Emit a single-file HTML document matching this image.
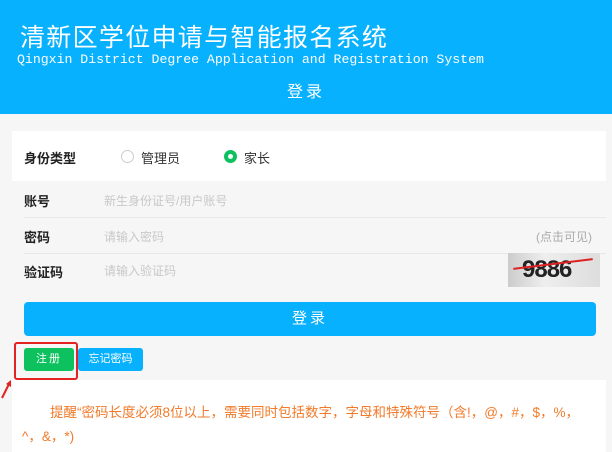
<!DOCTYPE html>
<html><head><meta charset="utf-8"><style>
*{margin:0;padding:0;box-sizing:border-box}
body{width:612px;height:452px;overflow:hidden;background:#f6f6f6;font-family:"Liberation Sans","Noto Sans CJK SC",sans-serif;position:relative}
.hd{position:absolute;left:0;top:0;width:612px;height:114px;background:#08b1fe;color:#fff}
.t1{position:absolute;left:20px;top:18px;font-size:25px;letter-spacing:1.3px;white-space:nowrap}
.t2{position:absolute;left:17px;top:52px;font-family:"Liberation Mono",monospace;font-size:13.2px;white-space:nowrap}
.t3{position:absolute;left:0;width:612px;text-align:center;top:78px;font-size:16px;letter-spacing:3px}
.card{position:absolute;left:12px;top:131px;width:594px;height:50px;background:#fff}
.a{position:absolute;font-size:13px;color:#222;font-weight:bold;white-space:nowrap}
.ph{position:absolute;font-size:12px;color:#c8c8c8;white-space:nowrap}
.ln{position:absolute;left:24px;width:582px;height:1px;background:#e8e8e8}
.r{position:absolute;width:13px;height:13px;border-radius:50%}
</style></head><body>
<div class="hd">
<div class="t1">清新区学位申请与智能报名系统</div>
<div class="t2">Qingxin District Degree Application and Registration System</div>
<div class="t3">登录</div>
</div>
<div class="card"></div>
<div class="a" style="left:24px;top:148px">身份类型</div>
<div class="r" style="left:121px;top:150px;border:1px solid #ccc"></div>
<div style="position:absolute;left:141px;top:148px;font-size:13px;color:#333">管理员</div>
<div class="r" style="left:224px;top:150px;border:4px solid #0dc15f"></div>
<div style="position:absolute;left:244px;top:148px;font-size:13px;color:#333">家长</div>
<div class="a" style="left:24px;top:191px">账号</div>
<div class="ph" style="left:104px;top:192px">新生身份证号/用户账号</div>
<div class="ln" style="top:217px"></div>
<div class="a" style="left:24px;top:227px">密码</div>
<div class="ph" style="left:104px;top:228px">请输入密码</div>
<div class="ph" style="left:536px;top:228px;color:#aaa">(点击可见)</div>
<div class="ln" style="top:253px"></div>
<div class="a" style="left:24px;top:262px">验证码</div>
<div class="ph" style="left:104px;top:262px">请输入验证码</div>
<div style="position:absolute;left:508px;top:253px;width:92px;height:34px;background:linear-gradient(90deg,#ccc,#eee 40%,#ddd);overflow:hidden">
<div style="position:absolute;left:14px;top:3px;font:bold 24px 'Liberation Sans',sans-serif;color:#222;letter-spacing:-1px">9886</div>
<div style="position:absolute;left:5px;top:10px;width:80px;height:2px;background:#d22;transform:rotate(-7deg)"></div>
</div>
<div style="position:absolute;left:24px;top:302px;width:572px;height:34px;background:#08b1fe;border-radius:4px;color:#fff;font-size:15px;text-align:center;line-height:34px;letter-spacing:3px">登录</div>
<div style="position:absolute;left:14px;top:342px;width:64px;height:38px;border:2px solid #e52222;border-radius:3px"></div>
<div style="position:absolute;left:24px;top:348px;width:50px;height:23px;background:#0dc15f;border-radius:3px;color:#fff;font-size:11px;text-align:center;line-height:23px;letter-spacing:2px">注册</div>
<div style="position:absolute;left:78px;top:348px;width:65px;height:23px;background:#08b1fe;border-radius:3px;color:#fff;font-size:11px;text-align:center;line-height:23px">忘记密码</div>
<svg style="position:absolute;left:0;top:378px" width="14" height="22"><path d="M2 20 L10 4" stroke="#e52222" stroke-width="2"/><path d="M6 6 L11 2 L11 9 Z" fill="#e52222"/></svg>
<div style="position:absolute;left:12px;top:380px;width:594px;height:72px;background:#fff"></div>
<div style="position:absolute;left:22px;top:401px;width:568px;font-size:13.5px;color:#f27a2a;line-height:24px;text-indent:28px">提醒“密码长度必须8位以上，需要同时包括数字，字母和特殊符号（含!，@，#，$，%，^，&amp;，*)</div>
</body></html>
